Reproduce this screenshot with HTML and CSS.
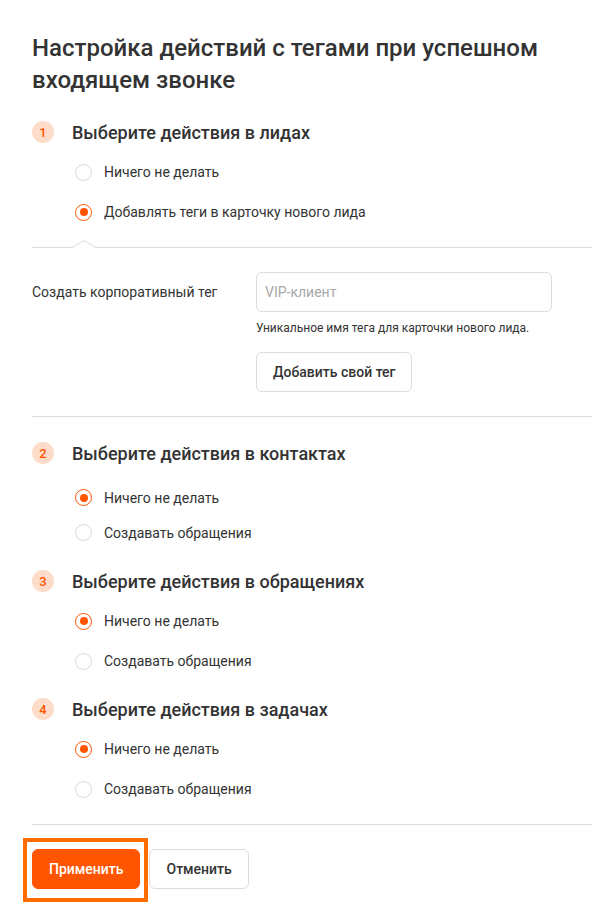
FILE: index.html
```html
<!DOCTYPE html>
<html lang="ru">
<head>
  <meta charset="UTF-8">
  <title>Настройка действий с тегами</title>
  <link rel="stylesheet" href="styles.css">
</head>
<body>

  <div class="page">
    <h1>Настройка действий с тегами при успешном входящем звонке</h1>

    <!-- Шаг 1 -->
    <div class="step">
      <div class="step-head"><span class="num">1</span>Выберите действия в лидах</div>
      <div class="options">
        <label class="option"><span class="radio"></span>Ничего не делать</label>
        <label class="option"><span class="radio checked"></span>Добавлять теги в карточку нового лида</label>
      </div>
    </div>

    <div class="divider notch">
      <svg class="notch-mark" width="24" height="9" viewBox="0 0 24 9">
        <polygon points="0,9 12,1.5 24,9" fill="#fff"></polygon>
        <polyline points="0,8.5 12,1.5 24,8.5" fill="none" stroke="#dcdcdc" stroke-width="1"></polyline>
      </svg>
    </div>

    <div class="tag-form">
      <div class="tag-label">Создать корпоративный тег</div>
      <div class="tag-field">
        <input type="text" placeholder="VIP-клиент">
        <div class="hint">Уникальное имя тега для карточки нового лида.</div>
        <button class="btn">Добавить свой тег</button>
      </div>
    </div>

    <div class="divider"></div>

    <!-- Шаг 2 -->
    <div class="step">
      <div class="step-head"><span class="num">2</span>Выберите действия в контактах</div>
      <div class="options compact">
        <label class="option"><span class="radio checked"></span>Ничего не делать</label>
        <label class="option"><span class="radio"></span>Создавать обращения</label>
      </div>
    </div>

    <!-- Шаг 3 -->
    <div class="step next">
      <div class="step-head"><span class="num">3</span>Выберите действия в обращениях</div>
      <div class="options">
        <label class="option"><span class="radio checked"></span>Ничего не делать</label>
        <label class="option"><span class="radio"></span>Создавать обращения</label>
      </div>
    </div>

    <!-- Шаг 4 -->
    <div class="step next">
      <div class="step-head"><span class="num">4</span>Выберите действия в задачах</div>
      <div class="options">
        <label class="option"><span class="radio checked"></span>Ничего не делать</label>
        <label class="option"><span class="radio"></span>Создавать обращения</label>
      </div>
    </div>

    <div class="divider"></div>

    <div class="actions">
      <div class="highlight">
        <button class="btn btn-primary">Применить</button>
      </div>
      <button class="btn">Отменить</button>
    </div>
  </div>

</body>
</html>
```

FILE: styles.css
```css
body {
  margin: 0;
  background: #ffffff;
  font-family: Roboto, "Noto Sans", Arial, sans-serif;
  color: #333333;
}
.page {
  padding: 32px 0 40px 32px;
}
h1 {
  margin: 0;
  font-size: 24px;
  line-height: 32px;
  font-weight: 500;
  color: #333333;
  padding-right: 24px;
}
.step {
  margin-top: 24px;
}
.step.next {
  margin-top: 16px;
}
.step-head {
  display: flex;
  align-items: center;
  height: 24px;
  font-size: 18px;
  font-weight: 500;
  color: #333333;
}
.num {
  width: 22px;
  height: 22px;
  border-radius: 50%;
  background: #fddcca;
  color: #ff5500;
  font-size: 13px;
  font-weight: 500;
  display: flex;
  align-items: center;
  justify-content: center;
  margin-right: 18px;
}
.options {
  margin-top: 8px;
  padding-left: 43px;
}
.option {
  display: flex;
  align-items: center;
  height: 40px;
  font-size: 14px;
  color: #333333;
  cursor: pointer;
}
.options.compact {
  margin-top: 15px;
  padding-bottom: 3px;
}
.options.compact .option {
  height: 35px;
}
.radio {
  box-sizing: border-box;
  width: 17px;
  height: 17px;
  border: 1px solid #d9d9d9;
  border-radius: 50%;
  margin-right: 12px;
  display: flex;
  align-items: center;
  justify-content: center;
  background: #fff;
}
.radio.checked {
  border: 1.5px solid #ff5500;
}
.radio.checked::after {
  content: "";
  width: 8px;
  height: 8px;
  border-radius: 50%;
  background: #ff5500;
}
.divider {
  border-top: 1px solid #dcdcdc;
  margin-top: 15px;
}
.notch {
  position: relative;
}
.notch-mark {
  position: absolute;
  left: 40px;
  top: -9px;
  display: block;
}
.tag-form {
  display: flex;
  margin-top: 24px;
}
.tag-label {
  width: 224px;
  line-height: 40px;
  font-size: 14px;
  color: #333333;
}
.tag-field {
  width: 296px;
}
.tag-field input {
  box-sizing: border-box;
  width: 100%;
  height: 40px;
  border: 1px solid #dcdcdc;
  border-radius: 6px;
  padding: 0 8px;
  font-family: inherit;
  font-size: 14px;
  color: #333;
  outline: none;
}
.tag-field input::placeholder {
  color: #a8a8a8;
}
.hint {
  margin-top: 8px;
  font-size: 12px;
  line-height: 16px;
  color: #333333;
}
.tag-field .btn {
  margin-top: 16px;
}
.tag-form + .divider {
  margin-top: 24px;
}
.btn {
  height: 40px;
  padding: 0 16px;
  border: 1px solid #dcdcdc;
  border-radius: 6px;
  background: #ffffff;
  font-family: inherit;
  font-size: 14px;
  font-weight: 500;
  color: #333333;
  cursor: pointer;
}
.btn-primary {
  background: #ff5500;
  border-color: #ff5500;
  color: #ffffff;
}
.actions {
  display: flex;
  gap: 9px;
  margin-top: 24px;
}
.highlight {
  position: relative;
  display: flex;
}
.highlight::after {
  content: "";
  position: absolute;
  left: -9px;
  right: -8px;
  top: -11px;
  bottom: -13px;
  border: 4px solid #ff6d00;
  pointer-events: none;
}
```
